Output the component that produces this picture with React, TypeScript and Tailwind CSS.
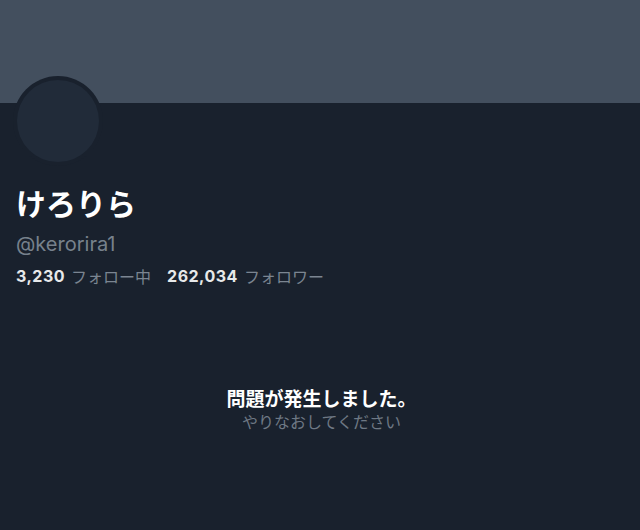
import React from "react";

export default function App() {
  const font = { fontFamily: 'Inter, "Noto Sans CJK JP", sans-serif' };
  const cjk = { fontFamily: '"Noto Sans CJK JP", sans-serif' };
  return (
    <div className="w-[640px] h-[530px] bg-[#19212d] overflow-hidden" style={font}>
      <div className="h-[103px] bg-[#434f5e]" />
      <div className="px-[13px]">
        <div className="-mt-[27px] w-[90px] h-[90px] rounded-full bg-[#19212d] p-[4px]">
          <div className="w-full h-full rounded-full bg-[#212b39]" />
        </div>
        <div className="mt-[16px] pl-[3px] text-[30px] font-bold text-white leading-[40px]" style={cjk}>けろりら</div>
        <div className="mt-[10px] pl-[3px] text-[20px] text-[#77818c] leading-[24px]">@kerorira1</div>
        <div className="mt-[9px] pl-[3px] flex items-center text-[16px] leading-[22px]">
          <span className="font-bold text-[#e7e9ea] tracking-[0.5px]">3,230</span>
          <span className="ml-[6px] text-[#7b8591]" style={cjk}>フォロー中</span>
          <span className="ml-[16px] font-bold text-[#e7e9ea] tracking-[0.5px]">262,034</span>
          <span className="ml-[6px] text-[#7b8591]" style={cjk}>フォロワー</span>
        </div>
      </div>
      <div className="mt-[99px] pl-[3px] flex flex-col items-center" style={cjk}>
        <div className="text-[19px] font-bold text-white leading-[24px]">問題が発生しました。</div>
        <div className="text-[16px] text-[#6e7884] leading-[22px]">やりなおしてください</div>
      </div>
    </div>
  );
}
